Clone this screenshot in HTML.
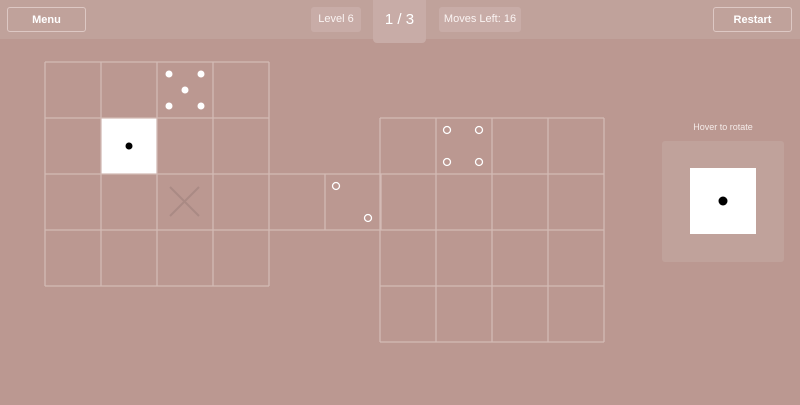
<!DOCTYPE html>
<html><head><style>
body{margin:0;width:800px;height:405px;background:#bb9891;font-family:"Liberation Sans",sans-serif;position:relative;overflow:hidden}
.hdr{position:absolute;left:0;top:0;width:800px;height:39px;background:#c0a29b}
.btn{position:absolute;top:7px;height:23px;border:1.5px solid #ddc8c4;border-radius:3px;color:#fff;font-weight:bold;font-size:11px;line-height:24px;text-align:center}
.pill{position:absolute;top:7px;height:25px;background:#c8aca7;border-radius:3px;color:#faf3f2;font-size:11px;line-height:25px;text-align:center}
.tab{position:absolute;left:373px;top:0;width:53px;height:43px;background:#c8aca7;border-radius:0 0 4px 4px;color:#fff;font-size:15px;line-height:39px;text-align:center}
svg{position:absolute;left:0;top:0}
</style></head><body>
<div class="hdr"></div>
<div class="btn" style="left:7px;width:77px">Menu</div>
<div class="btn" style="left:713px;width:77px">Restart</div>
<div class="pill" style="left:311px;width:50px">Level 6</div>
<div class="pill" style="left:439px;width:82px">Moves Left: 16</div>
<div class="tab">1 / 3</div>
<div style="position:absolute;left:662px;top:122px;width:122px;text-align:center;color:#f4ebe9;font-size:9px">Hover to rotate</div>
<div style="position:absolute;left:662px;top:141px;width:122px;height:121px;background:#c0a29b;border-radius:3px"></div>
<svg width="800" height="405">
<rect x="101" y="118" width="56" height="56" fill="#fff"/>
<circle cx="129" cy="146" r="3.5" fill="#000"/>
<g stroke="#d3bab5" stroke-width="1.3" fill="none">
<path d="M45 62H269M45 118H269M45 174H381M45 230H381M45 286H269M45 62V286M101 62V286M157 62V286M213 62V286M269 62V286M325 174V230M381 174V230"/>
<path d="M380 118H604M380 174H604M380 230H604M380 286H604M380 342H604M380 118V342M436 118V342M492 118V342M548 118V342M604 118V342"/>
</g>
<path d="M170 187L199 216M199 187L170 216" stroke="#aa8a84" stroke-width="2"/>
<g fill="#fff"><circle cx="169" cy="74" r="3.5"/><circle cx="201" cy="74" r="3.5"/><circle cx="185" cy="90" r="3.5"/><circle cx="169" cy="106" r="3.5"/><circle cx="201" cy="106" r="3.5"/></g>
<g fill="none" stroke="#fff" stroke-width="1.3"><circle cx="447" cy="130" r="3.5"/><circle cx="479" cy="130" r="3.5"/><circle cx="447" cy="162" r="3.5"/><circle cx="479" cy="162" r="3.5"/><circle cx="336" cy="186" r="3.5"/><circle cx="368" cy="218" r="3.5"/></g>
<rect x="690" y="168" width="66" height="66" fill="#fff"/>
<circle cx="723" cy="201" r="4.5" fill="#000"/>
</svg>
</body></html>
